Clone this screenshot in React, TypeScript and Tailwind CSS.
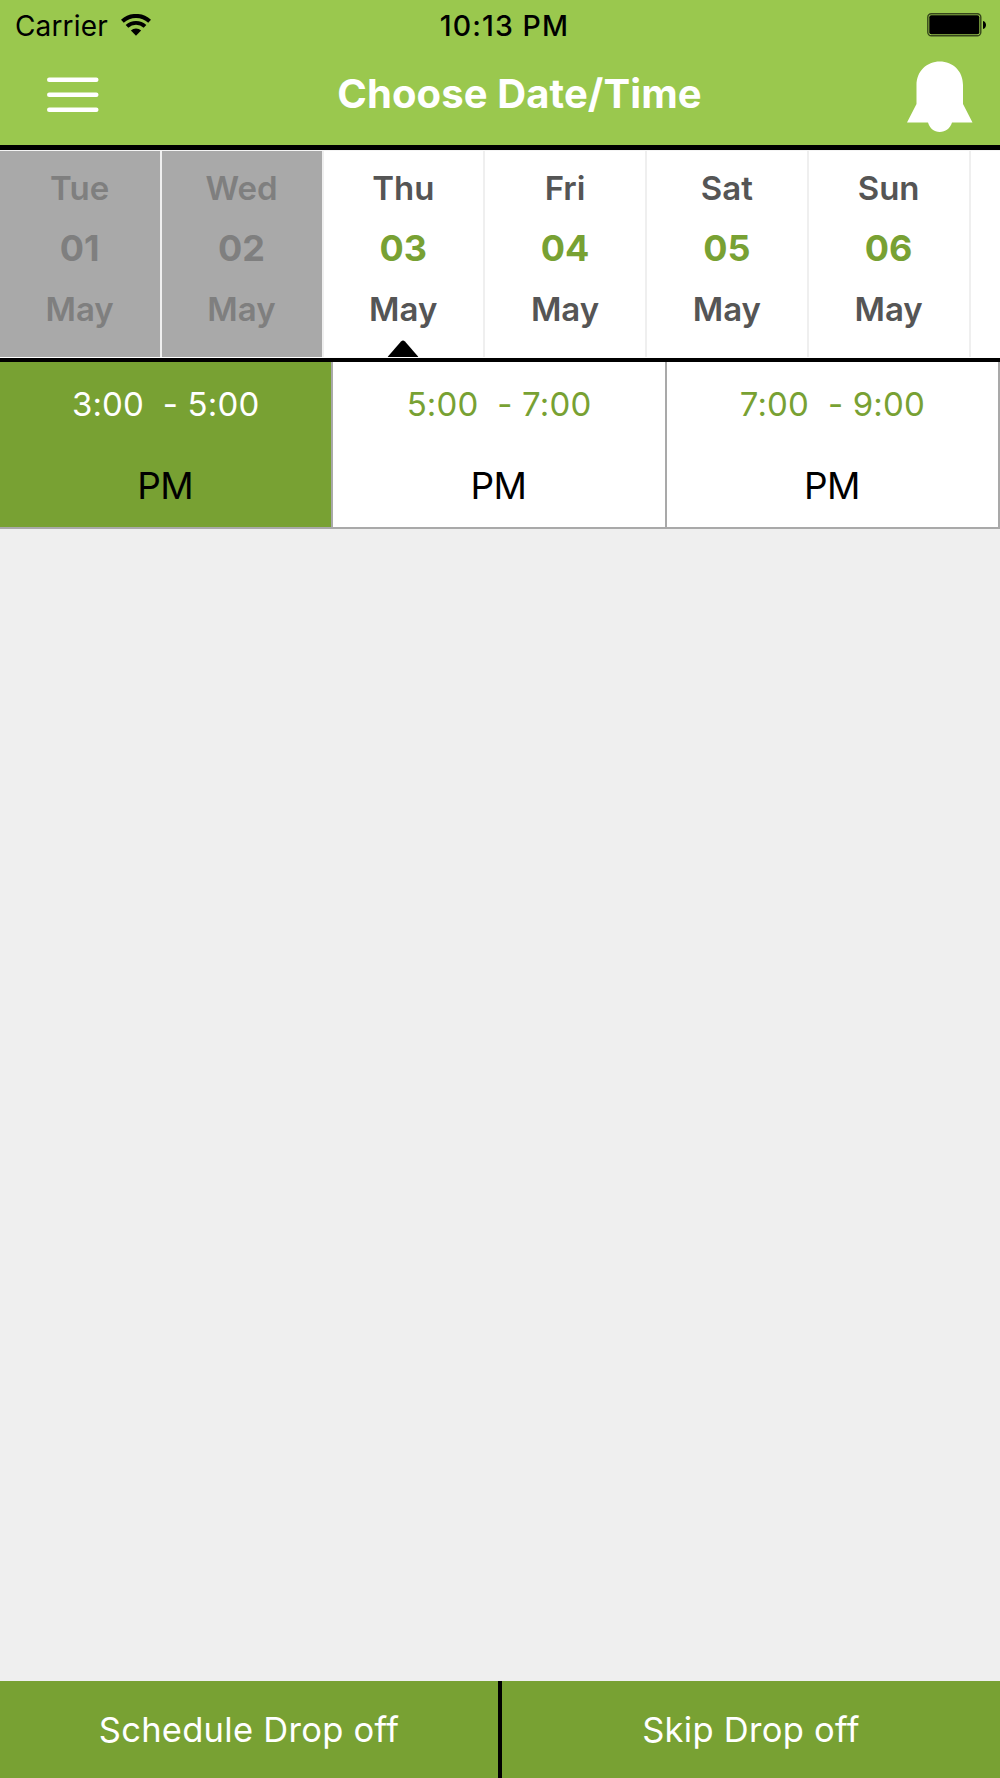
import React, { useState } from "react";

interface Day {
  weekday: string;
  date: string;
  month: string;
  disabled?: boolean;
}

interface Slot {
  range: string;
  period: string;
}

const DAYS: Day[] = [
  { weekday: "Tue", date: "01", month: "May", disabled: true },
  { weekday: "Wed", date: "02", month: "May", disabled: true },
  { weekday: "Thu", date: "03", month: "May" },
  { weekday: "Fri", date: "04", month: "May" },
  { weekday: "Sat", date: "05", month: "May" },
  { weekday: "Sun", date: "06", month: "May" },
];

const SLOTS: Slot[] = [
  { range: "3:00  - 5:00", period: "PM" },
  { range: "5:00  - 7:00", period: "PM" },
  { range: "7:00  - 9:00", period: "PM" },
];

export default function App() {
  const [day, setDay] = useState("03");
  const [slot, setSlot] = useState(0);

  return (
    <div className="flex h-[1778px] w-[1000px] flex-col overflow-hidden bg-[#efefef] font-['Inter',sans-serif] text-black">
      <header className="h-[150px] shrink-0 border-b-[5px] border-black bg-[#9ac84e]">
        <StatusBar />
        <div className="grid h-[88px] grid-cols-[1fr_auto_1fr] items-center pr-[27px] pl-[47px]">
          <button aria-label="Menu" className="pb-px">
            <MenuIcon />
          </button>
          <h1 className="translate-x-[9.5px] pb-[2px] text-[40px] font-bold tracking-[0.1px] text-white">Choose Date/Time</h1>
          <button aria-label="Notifications" className="justify-self-end pt-[4px]">
            <BellIcon />
          </button>
        </div>
      </header>

      {/* days */}
      <div className="flex h-[212px] shrink-0 overflow-hidden border-t border-b-4 border-t-[#f4f4f4] border-b-black bg-white pb-px">
        {DAYS.map((d) => (
          <DayCell key={d.date} day={d} selected={d.date === day} onSelect={() => setDay(d.date)} />
        ))}
      </div>

      {/* time slots */}
      <div className="grid h-[167px] shrink-0 grid-cols-3 border-b-2 border-[#a9a9a9] bg-white">
        {SLOTS.map((s, i) => (
          <button
            key={s.range}
            onClick={() => setSlot(i)}
            className={`flex flex-col items-center border-r-2 border-[#a9a9a9] pt-[22px] ${
              i === slot ? "bg-[#78a133] text-white" : "text-[#78a133]"
            }`}
          >
            <span className="text-[33px] leading-[40px] tracking-[0.15px] whitespace-pre">{s.range}</span>
            <span className="mt-[40px] pr-px text-[37px] leading-[44px] tracking-[-0.6px] text-black">{s.period}</span>
          </button>
        ))}
      </div>

      <footer className="mt-auto grid h-[97px] shrink-0 grid-cols-2 bg-[#78a133] text-[34.5px] tracking-[0.28px] text-white">
        <button className="border-r-2 border-black">Schedule Drop off</button>
        <button className="border-l-2 border-black">Skip Drop off</button>
      </footer>
    </div>
  );
}

function StatusBar() {
  return (
    <div className="grid h-[51px] grid-cols-[1fr_auto_1fr] items-center pr-[13px] pl-[15px] text-[28px]">
      <div className="flex items-center gap-[13px]">
        <span className="tracking-[0.15px]">Carrier</span>
        <WifiIcon />
      </div>
      <span className="translate-x-[3.5px] pt-px text-[28.5px] font-medium tracking-[1.1px]">10:13 PM</span>
      <div className="justify-self-end pb-px">
        <BatteryIcon />
      </div>
    </div>
  );
}

function DayCell({ day, selected, onSelect }: { day: Day; selected: boolean; onSelect: () => void }) {
  return (
    <button
      onClick={onSelect}
      disabled={day.disabled}
      className={`relative flex w-[161.8px] shrink-0 flex-col items-center border-r-2 border-[#efefef] pt-[17px] pr-[0.5px] ${
        day.disabled ? "bg-[#a9a9a9] text-[#7f7f7f]" : "text-[#555555]"
      }`}
    >
      <span className="text-[33px] leading-[40px] font-semibold">{day.weekday}</span>
      <span className={`mt-[20px] text-[36px] leading-[40px] font-bold ${day.disabled ? "" : "text-[#78a133]"}`}>
        {day.date}
      </span>
      <span className="mt-[21px] text-[33px] leading-[40px] font-semibold">{day.month}</span>
      {selected && (
        <svg className="absolute bottom-0 left-1/2 -translate-x-1/2" width="31" height="17" viewBox="0 0 31 17">
          <path d="M0 17 L13.5 1.5 Q15.5 -0.5 17.5 1.5 L31 17 Z" fill="black" />
        </svg>
      )}
    </button>
  );
}

function MenuIcon() {
  return (
    <svg width="52" height="36" viewBox="0 0 52 36" fill="white">
      <rect y="0.5" width="51.5" height="4.5" rx="2.2" />
      <rect y="15.5" width="51.5" height="4.5" rx="2.2" />
      <rect y="30.5" width="51.5" height="4.5" rx="2.2" />
    </svg>
  );
}

function BellIcon() {
  return (
    <svg width="66" height="72" viewBox="0 0 66 72" fill="white">
      <path d="M0 61.5 L9.5 43 V24 C9.5 10 20 0.5 32.7 0.5 C46 0.5 56 10 56 24 V43 L65.5 61.5 H45 C43 67.5 38.5 71 32.7 71 C27 71 23 67.5 21 61.5 Z" />
    </svg>
  );
}

function WifiIcon() {
  return (
    <svg className="-translate-y-px" width="30" height="22" viewBox="0 0 30 22" fill="none">
      <path d="M1.4 7.3 C9 0.1 21 0.1 28.6 7.3" stroke="black" strokeWidth="4" />
      <path d="M6 12.4 C11 7.7 19 7.7 24 12.4" stroke="black" strokeWidth="3.9" />
      <path d="M15 21.8 L9.9 16.6 C12.5 13.7 17.5 13.7 20.1 16.6 Z" fill="black" />
    </svg>
  );
}

function BatteryIcon() {
  return (
    <svg width="60" height="24" viewBox="0 0 60 24">
      <rect x="0.8" y="0.8" width="53" height="22" rx="3.5" fill="none" stroke="black" strokeOpacity="0.65" strokeWidth="1.4" />
      <rect x="2.3" y="2.3" width="50" height="19" rx="2" fill="black" />
      <path d="M56 8 C60 9 60 15 56 16 Z" fill="black" />
    </svg>
  );
}
